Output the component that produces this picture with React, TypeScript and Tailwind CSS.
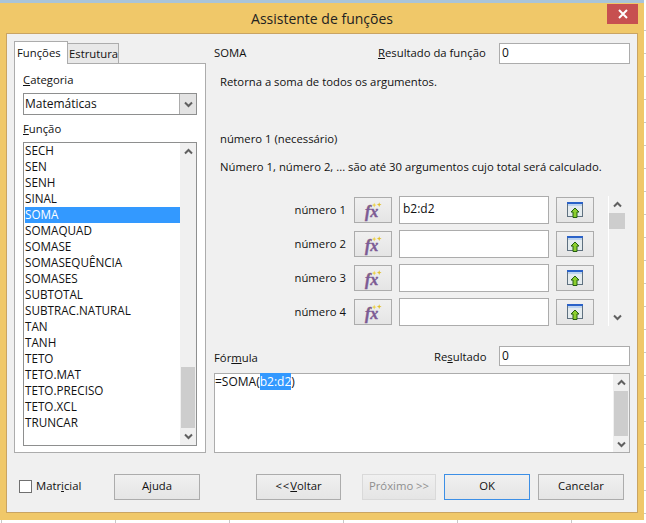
import React from 'react';

const functions = [
  "SECH", "SEN", "SENH", "SINAL", "SOMA", "SOMAQUAD", "SOMASE", "SOMASEQUÊNCIA", "SOMASES",
  "SUBTOTAL", "SUBTRAC.NATURAL", "TAN", "TANH", "TETO", "TETO.MAT", "TETO.PRECISO", "TETO.XCL", "TRUNCAR"
];

const Chevron = ({ up = false }: { up?: boolean }) => (
  <svg width="9" height="7" viewBox="0 0 9 7">
    <path d={up ? "M1 5.5 L4.5 2 L8 5.5" : "M1 1.5 L4.5 5 L8 1.5"} fill="none" stroke="#606060" strokeWidth="2" />
  </svg>
);

const ScrollBar = ({ thumbTop, thumbHeight }: { thumbTop: number; thumbHeight: number }) => (
  <div className="w-[16px] flex flex-col h-full bg-[#f0f0f0] shrink-0">
    <div className="h-[17px] flex items-center justify-center shrink-0"><Chevron up /></div>
    <div className="flex-1 flex flex-col px-[1px]">
      <div style={{ height: thumbTop }} />
      <div className="bg-[#cdcdcd]" style={{ height: thumbHeight }} />
    </div>
    <div className="h-[17px] flex items-center justify-center shrink-0"><Chevron /></div>
  </div>
);

const FxIcon = () => (
  <svg width="20" height="24" viewBox="0 0 20 24">
    <path d="M6 8 l.6-1.5 .6 1.5 1.5.5-1.5.5-.6 1.5-.6-1.5-1.5-.5z" fill="#eed24a" />
    <path d="M10.5 6.5 l.7-1.8 .7 1.8 1.7.6-1.7.6-.7 1.8-.7-1.8-1.7-.6z" fill="#eed24a" />
    <path d="M15.5 6 l.7-1.8 .7 1.8 1.7.6-1.7.6-.7 1.8-.7-1.8-1.7-.6z" fill="#e0bf2c" />
    <text x="2" y="19" fontFamily="'Liberation Serif', serif" fontStyle="italic" fontWeight="700" fontSize="16" fill="#7c5b94" stroke="#7c5b94" strokeWidth=".4">fx</text>
  </svg>
);

const ShrinkIcon = () => (
  <svg width="16" height="17" viewBox="0 0 16 17">
    <rect x=".5" y=".5" width="15" height="14" fill="#e4ebee" stroke="#5f7180" />
    <rect x="0" y="0" width="16" height="2" fill="#2a62c8" />
    <rect x="1" y="2" width="14" height="2" fill="#bcd3f0" />
    <path d="M8 6 L12 10 H10 V15.5 H6 V10 H4 Z" fill="#8ccf2e" stroke="#245e10" strokeWidth="1" />
  </svg>
);

const Btn = ({ className = "", children }: { className?: string; children: React.ReactNode }) => (
  <div className={`h-[26px] border border-[#acacac] bg-gradient-to-b from-[#f0f0f0] to-[#e5e5e5] flex items-center justify-center ${className}`}>
    {children}
  </div>
);

const ArgRow = ({ n, value }: { n: number; value: string }) => (
  <div className="flex items-center h-[28px]">
    <span className="w-[132px] text-right">número {n}</span>
    <Btn className="ml-[8px] w-[38px]"><FxIcon /></Btn>
    <div className="ml-[7px] w-[150px] h-[28px] border border-[#acacac] bg-white px-[3px] leading-[24px] text-[12px]">{value}</div>
    <Btn className="ml-[7px] w-[38px]"><ShrinkIcon /></Btn>
  </div>
);

const App = () => {
  return (
    <div className="w-[646px] h-[523px] flex flex-col bg-white overflow-hidden text-[11.3px] text-[#111] font-['Open_Sans','Noto_Sans',sans-serif]">
      <div className="flex h-[520px] shrink-0">
        <div className="w-[644px] flex flex-col bg-[#f0c869] border-t-[3px] border-[#a9c4d9] px-[6px] pb-[7px]">
          <div className="h-[30px] flex items-center justify-center relative shrink-0">
            <span className="text-[14px] text-[#222]">Assistente de funções</span>
            <div className="absolute right-0 top-[1px] w-[31px] h-[20px] bg-[#c75050] flex items-center justify-center">
              <svg width="10" height="10" viewBox="0 0 10 10">
                <path d="M1 1 L9 9 M9 1 L1 9" stroke="#fff" strokeWidth="2" />
              </svg>
            </div>
          </div>
          <div className="flex-1 border border-[#c9a463] bg-[#f0f0f0] flex flex-col">
            <div className="flex h-[419px] pt-[7px] shrink-0">
              <div className="ml-[7px] w-[192px] flex flex-col shrink-0">
                <div className="flex h-[22px] shrink-0 items-end">
                  <div className="h-[23px] w-[54px] bg-white border border-b-0 border-[#acacac] pl-[2px] leading-[22px] relative top-[1px] z-10">Funções</div>
                  <div className="h-[20px] w-[51px] bg-[#e8e8e8] border border-l-0 border-b-0 border-[#acacac] leading-[19px] pl-[1px]">Estrutura</div>
                </div>
                <div className="flex-1 bg-white border border-[#acacac] px-[8px] flex flex-col">
                  <div className="mt-[7px] h-[17px] leading-[17px]"><span className="underline">C</span>ategoria</div>
                  <div className="mt-[5px] h-[22px] border border-[#8e8f8f] flex shrink-0">
                    <div className="flex-1 px-[1px] leading-[20px] text-[12px]">Matemáticas</div>
                    <div className="w-[17px] bg-[#e3e3e3] border-l border-[#acacac] flex items-center justify-center"><Chevron /></div>
                  </div>
                  <div className="mt-[6px] h-[17px] leading-[15px]"><span className="underline">F</span>unção</div>
                  <div className="mt-[4px] h-[304px] border border-[#8e8f8f] flex shrink-0">
                    <div className="flex-1 pl-[1px] text-[11.7px]">
                      {functions.map((f) => (
                        <div key={f} className={`h-[16px] leading-[14px] ${f === "SOMA" ? "bg-[#3399ff] text-white" : ""}`}>{f}</div>
                      ))}
                    </div>
                    <ScrollBar thumbTop={207} thumbHeight={61} />
                  </div>
                </div>
              </div>
              <div className="ml-[8px] w-[416px] flex flex-col">
                <div className="flex items-center h-[22px] mt-[1px]">
                  <span className="w-[164px]">SOMA</span>
                  <span className="w-[121px]"><span className="underline">R</span>esultado da função</span>
                  <div className="w-[131px] h-[21px] border border-[#acacac] bg-white px-[2px] leading-[18px] text-[12px]">0</div>
                </div>
                <div className="ml-[6px] mt-[9px] h-[17px] leading-[17px]">Retorna a soma de todos os argumentos.</div>
                <div className="ml-[6px] mt-[40px] h-[17px] leading-[17px]">número 1 (necessário)</div>
                <div className="ml-[6px] mt-[11px] h-[17px] leading-[17px]">Número 1, número 2, ... são até 30 argumentos cujo total será calculado.</div>
                <div className="flex mt-[21px] h-[130px] shrink-0">
                  <div className="flex flex-col gap-[6px]">
                    <ArgRow n={1} value="b2:d2" />
                    <ArgRow n={2} value="" />
                    <ArgRow n={3} value="" />
                    <ArgRow n={4} value="" />
                  </div>
                  <div className="ml-[14px] w-[17px] h-[130px] border-l border-white bg-[#f0f0f0] flex flex-col">
                    <div className="h-[17px] flex items-center justify-center shrink-0"><Chevron up /></div>
                    <div className="flex-1"><div className="h-[16px] bg-[#cdcdcd]" /></div>
                    <div className="h-[17px] flex items-center justify-center shrink-0"><Chevron /></div>
                  </div>
                </div>
                <div className="flex items-center h-[20px] mt-[20px] shrink-0">
                  <span className="w-[220px] pt-[4px]">Fór<span className="underline">m</span>ula</span>
                  <span className="w-[65px] pt-[2px]">Re<span className="underline">s</span>ultado</span>
                  <div className="w-[131px] h-[20px] border border-[#acacac] bg-white px-[2px] leading-[17px] text-[12px]">0</div>
                </div>
                <div className="mt-[7px] h-[80px] border border-[#acacac] bg-white flex shrink-0">
                  <div className="flex-1 leading-[16px] text-[12px]">=SOMA(<span className="bg-[#3399ff] text-white">b2:d2</span>)</div>
                  <ScrollBar thumbTop={0} thumbHeight={45} />
                </div>
              </div>
            </div>
            <div className="flex items-center mt-[20px] h-[27px] shrink-0">
              <div className="ml-[12px] w-[13px] h-[13px] border border-[#707070] bg-white" />
              <span className="ml-[4px] w-[78px]">Matr<span className="underline">i</span>cial</span>
              <Btn className="w-[86px]">A<span className="underline">j</span>uda</Btn>
              <Btn className="ml-[56px] w-[85px]"><span className="tracking-[1px]">&lt;&lt;</span><span className="underline">V</span>oltar</Btn>
              <Btn className="ml-[21px] w-[74px] !border-[#d9d9d9] text-[#8f8f8f]">Próximo &gt;&gt;</Btn>
              <Btn className="ml-[8px] w-[86px] !border-[#3c8fe6]">OK</Btn>
              <Btn className="ml-[8px] w-[86px]">Cancelar</Btn>
            </div>
          </div>
        </div>
        <div className="flex-1 bg-[repeating-linear-gradient(to_bottom,#ffffff_0px,#ffffff_22px,#c8c8c8_22px,#c8c8c8_23px)] bg-[position:0_8px]" />
      </div>
      <div className="flex-1 bg-[repeating-linear-gradient(to_right,#c8c8c8_0px,#c8c8c8_1px,#ffffff_1px,#ffffff_114px)] bg-[position:1px_0]" />
    </div>
  );
};

export default App;
